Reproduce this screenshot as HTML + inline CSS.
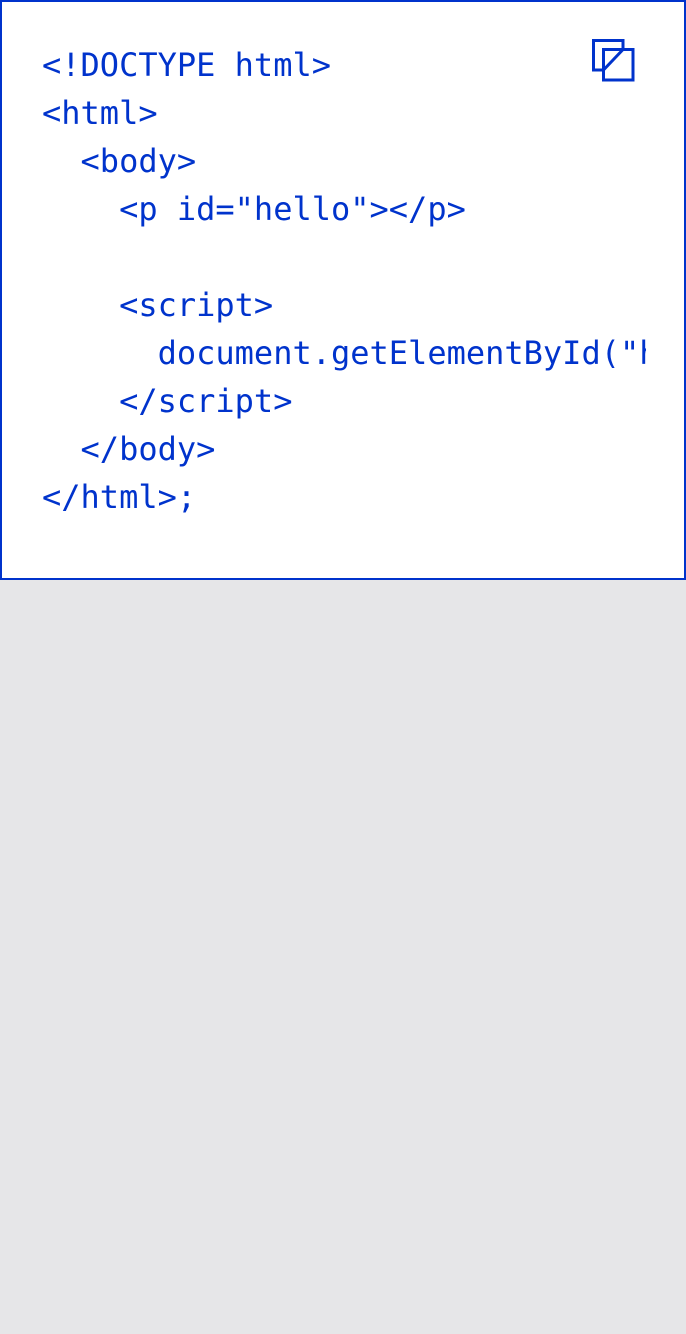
<!DOCTYPE html>
<html><head><style>
html,body{margin:0;padding:0;background:#e6e6e8;width:686px;height:1334px;overflow:hidden}
.box{position:absolute;left:0;top:0;width:682px;height:576px;border:2px solid #0033cc;background:#fff}
pre{position:absolute;left:40px;top:39px;width:604px;overflow:hidden;margin:0;font-family:"DejaVu Sans Mono","Liberation Mono",monospace;font-size:32px;line-height:48px;color:#0033cc}
svg{position:absolute;left:588px;top:35px}
</style></head><body>
<div class="box">
<pre>&lt;!DOCTYPE html&gt;
&lt;html&gt;
  &lt;body&gt;
    &lt;p id="hello"&gt;&lt;/p&gt;

    &lt;script&gt;
      document.getElementById("hello").innerHTML = "Hello";
    &lt;/script&gt;
  &lt;/body&gt;
&lt;/html&gt;;</pre>
<svg width="50" height="50" viewBox="0 0 50 50" fill="none" stroke="#0033cc" stroke-width="3">
<path d="M13 33H3.5V3.5H33V13"/>
<rect x="13.5" y="12.5" width="29.5" height="30.5"/>
<path d="M13.5 33L33 12.5"/>
</svg>
</div>
</body></html>
